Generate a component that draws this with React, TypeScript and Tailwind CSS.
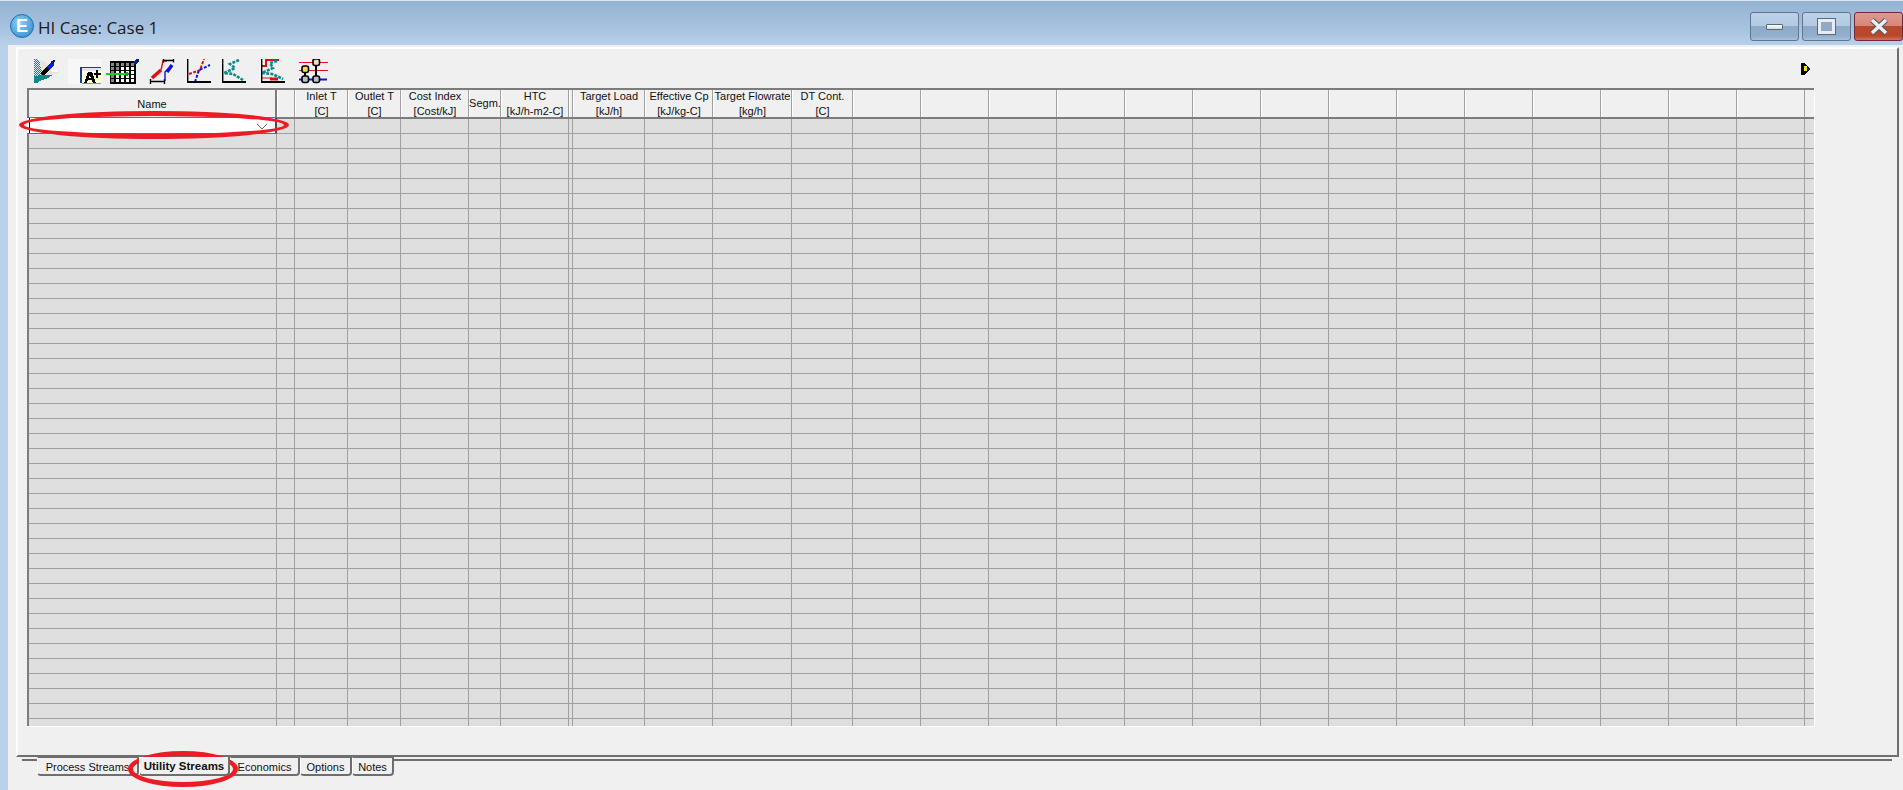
const font = { fontFamily: '"Liberation Sans", Arial, sans-serif' };

const columns: { w: number; a?: string; b?: string }[] = [
  { w: 18 },
  { w: 53, a: 'Inlet T', b: '[C]' },
  { w: 53, a: 'Outlet T', b: '[C]' },
  { w: 68, a: 'Cost Index', b: '[Cost/kJ]' },
  { w: 32, a: 'Segm.' },
  { w: 68, a: 'HTC', b: '[kJ/h-m2-C]' },
  { w: 4 },
  { w: 72, a: 'Target Load', b: '[kJ/h]' },
  { w: 68, a: 'Effective Cp', b: '[kJ/kg-C]' },
  { w: 79, a: 'Target Flowrate', b: '[kg/h]' },
  { w: 61, a: 'DT Cont.', b: '[C]' },
  ...Array.from({ length: 14 }, () => ({ w: 68 })),
  { w: 9 },
];

const tabs = [
  { label: 'Process Streams', w: 102 },
  { label: 'Utility Streams', w: 91, active: true },
  { label: 'Economics', w: 70 },
  { label: 'Options', w: 52 },
  { label: 'Notes', w: 42 },
];

function IconCase() {
  return (
    <svg width="26" height="25" viewBox="0 0 26 25" shapeRendering="crispEdges">
      <defs>
        <pattern id="dith" width="2" height="2" patternUnits="userSpaceOnUse">
          <rect width="2" height="2" fill="#d8eeee" />
          <rect width="1" height="1" fill="#0f8a8a" />
          <rect x="1" y="1" width="1" height="1" fill="#0f8a8a" />
        </pattern>
      </defs>
      <path d="M0 0h4l8 14L0 24z" fill="url(#dith)" />
      <path d="M5 1l7 2 5 8 7 2 1 1-8 2H9z" fill="#e4e4e4" />
      <path d="M17 11h6v2h-5z" fill="#fff" />
      <path d="M0 24V17l8-1h11l-5 3-8 3-3 2z" fill="#0f8a8a" />
      <path d="M7 13l5-5 3 3-5 5H8z" fill="#000" />
      <path d="M12 8l5-5h2l1 3-5 5z" fill="#0a1fd0" />
      <path d="M16 3l4-2 1 1-2 4z" fill="#061480" />
    </svg>
  );
}
function IconFont() {
  return (
    <svg width="34" height="25" viewBox="0 0 34 25" shapeRendering="crispEdges">
      <rect width="34" height="25" fill="#f7f7f7" />
      <rect x="12" y="8" width="21" height="16" fill="#ffffd0" />
      <rect x="12" y="8" width="21" height="4" fill="#dfe4f2" />
      <path d="M12 8h21v1H14v15h-2z" fill="#1c3f8f" />
      <path d="M14 24h19v1H14z" fill="#7c90b8" />
      <path d="M16 24l4-11h4l4 11h-3l-1-3h-4l-1 3zM21 19h2l-1-3z" fill="#000" />
      <path d="M26 14h2v-3h2v3h3v2h-3v3h-2v-3h-2z" fill="#000" />
    </svg>
  );
}
function IconTable() {
  const cells = [];
  for (let r = 0; r < 5; r++)
    for (let c = 0; c < 5; c++)
      cells.push(
        <rect key={r + '-' + c} x={5 + c * 5} y={4 + r * 4} width="3" height="3" fill={c < 1 || r === 0 ? '#888' : c === 1 && r === 1 ? '#888' : '#fff'} />,
      );
  return (
    <svg width="33" height="25" viewBox="0 0 33 25" shapeRendering="crispEdges">
      <rect x="4" y="2" width="26" height="23" fill="#000" />
      {cells}
      <path d="M28 2l3-2h2v2l-2 3h-3z" fill="#0a1a90" />
      <rect x="0" y="14" width="20" height="2" fill="#10d810" />
      <path d="M20 13h2v1h1v2h-1v1h-2z" fill="#10b010" />
    </svg>
  );
}
function IconShift() {
  return (
    <svg width="26" height="25" viewBox="0 0 26 25">
      <path d="M1.5 25V20M1 22.5h15M15.5 20v5" stroke="#000" strokeWidth="1.4" fill="none" />
      <path d="M3 19l9-8" stroke="#e01010" strokeWidth="3.5" fill="none" />
      <path d="M12 11L14 2h4" stroke="#e01010" strokeWidth="1.4" fill="none" />
      <path d="M16 22V13l4-4" stroke="#1010e0" strokeWidth="1.4" fill="none" />
      <path d="M18 13l5-7" stroke="#1010e0" strokeWidth="3.5" fill="none" />
      <path d="M15 1.5h10M14.5 0v3.5M24.5 0v3.5" stroke="#000" strokeWidth="1.4" fill="none" />
    </svg>
  );
}
function IconAxes({ children }: { children: React.ReactNode }) {
  return (
    <svg width="25" height="25" viewBox="0 0 25 25">
      {children}
      <path d="M0 0h1.4v22H24v2H0z" fill="#000" />
    </svg>
  );
}
function Composite() {
  return (
    <IconAxes>
      <path d="M2 15L13 11L17 0" stroke="#e01010" strokeWidth="2" fill="none" strokeDasharray="3 1.5" />
      <path d="M8 23L12 11L23 6" stroke="#1010e0" strokeWidth="2" fill="none" strokeDasharray="3 1.5" />
    </IconAxes>
  );
}
function Grand() {
  return (
    <IconAxes>
      <path d="M17 1L8 5L13 9L2 14L11 15L21 21" stroke="#0f8a8a" strokeWidth="2.6" fill="none" strokeDasharray="3 1.2" />
    </IconAxes>
  );
}
function Balanced() {
  return (
    <IconAxes>
      <path d="M1 7h4V1h13" stroke="#e01010" strokeWidth="2" fill="none" />
      <path d="M1 19h10" stroke="#e01010" strokeWidth="1" fill="none" />
      <path d="M9 20h8" stroke="#e01010" strokeWidth="3" fill="none" />
      <path d="M16 2L9 4L12 9L1 14L11 15L22 20" stroke="#0f8a8a" strokeWidth="2.6" fill="none" strokeDasharray="3 1.2" />
    </IconAxes>
  );
}
function Net() {
  const node = (x: number, y: number, fill: string) => (
    <rect key={x + '-' + y} x={x - 3} y={y - 3} width="6.5" height="6.5" rx="2" fill={fill} stroke="#000" strokeWidth="1.6" />
  );
  return (
    <svg width="30" height="25" viewBox="0 0 30 25">
      <path d="M0 3.5h29M0 11.5h29" stroke="#e01010" strokeWidth="1" />
      <path d="M0 20.5h28" stroke="#1010e0" strokeWidth="2" />
      <path d="M6 13v7M17 6v14" stroke="#000" strokeWidth="2" />
      {node(17, 3, '#e4e4b8')}
      {node(6, 10, '#eedd55')}
      {node(6, 20, '#b8c0c8')}
      {node(17, 20, '#b8c0c8')}
    </svg>
  );
}

function WinButton({ red, children }: { red?: boolean; children: React.ReactNode }) {
  return (
    <div
      className={
        'w-[49px] h-[29px] rounded-[3px] border flex items-center justify-center ' +
        (red
          ? 'border-[#6e2a38] bg-[linear-gradient(180deg,#dc9a90_0%,#d88578_48%,#b84a2e_50%,#b8482a_85%,#cc7660_100%)]'
          : 'border-[#5f7590] bg-[linear-gradient(180deg,#bcd2e8_0%,#b2cae2_48%,#8faac6_50%,#92aecb_85%,#a8c2dc_100%)]')
      }
    >
      {children}
    </div>
  );
}

function HeaderCell({ w, a, b, last }: { w: number; a?: string; b?: string; last?: boolean }) {
  return (
    <div
      style={{ width: w }}
      className={
        'shrink-0 h-full flex flex-col items-center justify-center text-center whitespace-nowrap text-[11px] leading-[15px] text-[#111] ' +
        (last ? '' : 'border-r border-r-[#a0a0a0] border-l border-l-white')
      }
    >
      {a && <span>{a}</span>}
      {b && <span>{b}</span>}
    </div>
  );
}

export default function App() {
  return (
    <div style={font} className="relative w-[1903px] h-[790px] overflow-hidden bg-[#f0f0f0]">
      {/* title bar */}
      <div className="h-[45px] border-t border-t-[#dfe8f2] flex items-start bg-[linear-gradient(180deg,#94b3d3_0%,#a3bfdc_50%,#b8d0ea_100%)]">
        <div className="ml-[10px] mt-[13px] w-[24px] h-[24px] rounded-full bg-[radial-gradient(circle_at_40%_35%,#8fd0f5,#2a84c8)] border border-[#1b6fb0] flex items-center justify-center">
          <span className="text-white font-bold text-[18px] leading-none">E</span>
        </div>
        <div style={{ fontFamily: '"Open Sans", sans-serif' }} className="ml-[4px] mt-[15px] text-[17px] leading-[24px] text-[#1a1a1a]">
          HI Case: Case 1
        </div>
        <div className="ml-auto mt-[11px] flex gap-[3px]">
          <WinButton>
            <div className="w-[17px] h-[6px] rounded-[1px] bg-[linear-gradient(180deg,#fff,#d8d8d8)] border border-[#566a84]" />
          </WinButton>
          <WinButton>
            <div className="w-[17px] h-[15px] border-[3px] border-[#e8ecf2] outline outline-1 outline-[#566a84] bg-[#8faac6]" />
          </WinButton>
          <WinButton red>
            <svg width="20" height="17" viewBox="0 0 20 17">
              <path d="M3 2l14 13M17 2L3 15" stroke="#4d5560" strokeWidth="5.5" />
              <path d="M3 2l14 13M17 2L3 15" stroke="#eceff2" strokeWidth="3.6" />
            </svg>
          </WinButton>
        </div>
      </div>

      {/* body */}
      <div className="flex h-[745px]">
        <div className="w-[8px] bg-[#b9d1ea]" />
        <div className="flex-1 pl-[8px] pr-[4px] pt-[2px]">
          {/* panel */}
          <div className="h-[710px] border-t-2 border-l-2 border-t-white border-l-white border-r-2 border-b-2 border-r-[#6e6e6e] border-b-[#6e6e6e] pl-[9px]">
            {/* toolbar */}
            <div className="h-[39px] pt-[10px] flex items-start">
              <div className="ml-[7px]"><IconCase /></div>
              <div className="ml-[8px]"><IconFont /></div>
              <div className="ml-[4px]"><IconTable /></div>
              <div className="ml-[10px]"><IconShift /></div>
              <div className="ml-[12px]"><Composite /></div>
              <div className="ml-[10px]"><Grand /></div>
              <div className="ml-[14px]"><Balanced /></div>
              <div className="ml-[13px]"><Net /></div>
              <svg className="ml-[1472px] mt-[4px]" width="10" height="12" viewBox="0 0 10 12" shapeRendering="crispEdges">
                <path d="M0 0h4l3 4 3 2-3 2-3 4H0z" fill="#000" />
                <path d="M3 3h3v5H3z" fill="#f0e020" />
                <path d="M6 5h3v2H6z" fill="#1010c0" />
              </svg>
            </div>

            {/* grid */}
            <div className="w-[1788px] h-[639px] border-r border-b border-r-white border-b-white overflow-hidden">
              <div className="h-[31px] w-[1787px] flex border-t-2 border-t-[#7c7c7c] border-b-2 border-b-[#7c7c7c] border-l-2 border-l-[#7c7c7c]">
                <div className="w-[248px] shrink-0 h-full border-r-2 border-r-[#7c7c7c] flex items-center justify-center pt-[1px] text-[11px] leading-[15px] text-[#111]">
                  Name
                </div>
                {columns.map((c, i) => (
                  <HeaderCell key={i} w={c.w} a={c.a} b={c.b} last={i === columns.length - 1} />
                ))}
              </div>
              <div className="border-l-2 border-l-[#7c7c7c] w-[1787px]">
                {Array.from({ length: 41 }, (_, r) => (
                  <div key={r} className="h-[15px] flex border-b border-b-[#a0a0a0] bg-[#dfdfdf]">
                    {r === 0 ? (
                      <div className="relative shrink-0 w-[250px] h-[17px] -ml-[2px] -mt-[2px] bg-white border-t border-b border-[#2f7fc0]">
                        <div className="absolute left-[2px] top-0 bottom-0 w-px bg-black" />
                        <div className="absolute right-0 top-0 bottom-0 w-[2px] bg-[#505050]" />
                        <svg className="absolute right-[9px] top-[5px]" width="12" height="7" viewBox="0 0 12 7">
                          <path d="M1 1l5 5 5-5" stroke="#666" strokeWidth="1" fill="none" />
                        </svg>
                      </div>
                    ) : (
                      <div className="w-[248px] shrink-0 h-full border-r border-r-[#a0a0a0]" />
                    )}
                    {columns.map((c, i) => (
                      <div
                        key={i}
                        style={{ width: c.w }}
                        className={'shrink-0 h-full ' + (i === columns.length - 1 ? '' : 'border-r border-r-[#a0a0a0]')}
                      />
                    ))}
                  </div>
                ))}
              </div>
            </div>
          </div>

          {/* tabs */}
          <div className="relative h-[20px] mt-[2px] ml-[6px] w-[1870px] border-t-2 border-t-[#6e6e6e]">
            <div className="absolute left-[15px] top-[-4px] flex">
              {tabs.map((t) => (
                <div
                  key={t.label}
                  style={{ width: t.w }}
                  className={
                    'h-[19px] pt-[2px] bg-[#f0f0f0] flex items-center justify-center text-[#111] whitespace-nowrap border-r-2 border-b-2 border-r-[#6e6e6e] border-b-[#6e6e6e] border-l border-l-white rounded-b-[4px] ' +
                    (t.active ? 'font-bold z-10 text-[11.5px]' : 'border-t border-t-[#6e6e6e] text-[11px]')
                  }
                >
                  {t.label}
                </div>
              ))}
            </div>
          </div>
        </div>
      </div>

      {/* red annotation ellipses */}
      <div className="absolute left-[19px] top-[111px] w-[270px] h-[28px] rounded-[50%] border-[5px] border-[#ed1c24]" />
      <div className="absolute left-[128px] top-[751px] w-[110px] h-[36px] rounded-[50%] border-[5px] border-[#ed1c24]" />
    </div>
  );
}
